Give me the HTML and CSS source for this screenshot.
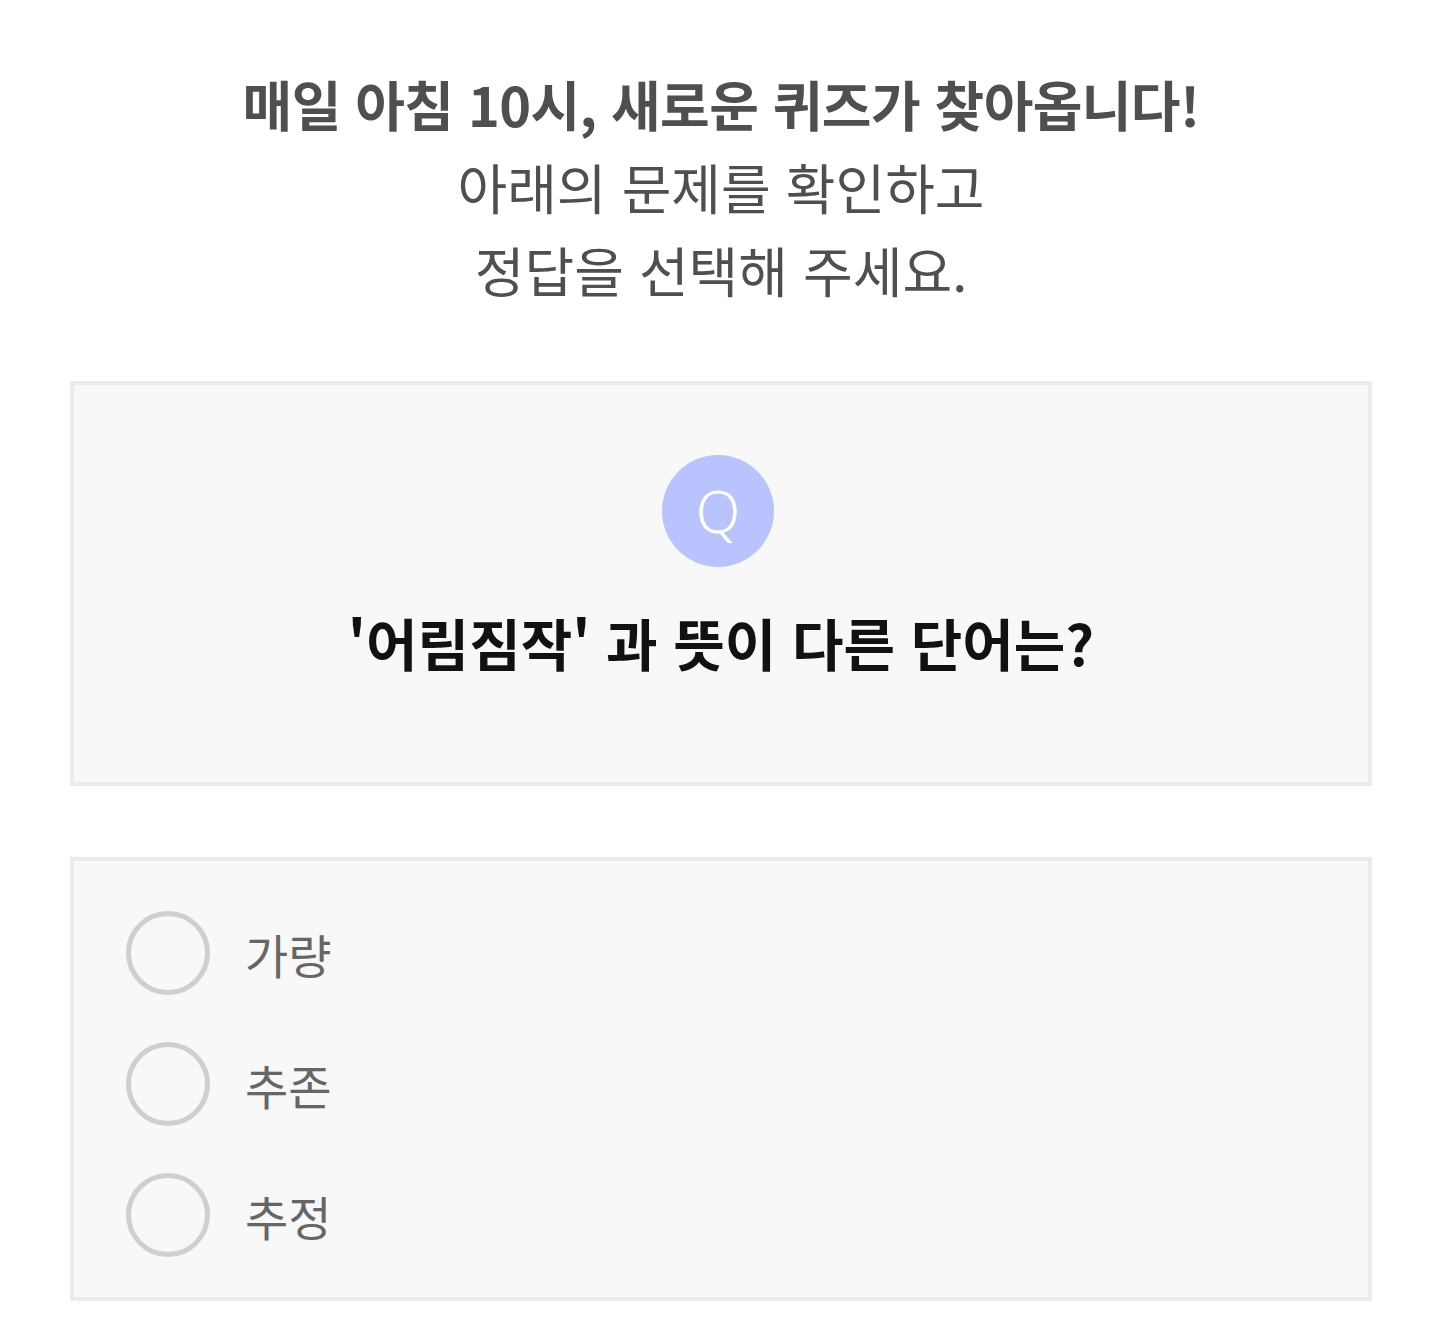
FILE: index.html
```html
<!DOCTYPE html>
<html lang="ko">
<head>
<meta charset="utf-8">
<title>오늘의 퀴즈</title>
<link rel="stylesheet" href="styles.css">
</head>
<body>
<main class="page">
  <header class="intro">
    <p class="intro-title">매일 아침 10시, 새로운 퀴즈가 찾아옵니다!</p>
    <p class="intro-line">아래의 문제를 확인하고</p>
    <p class="intro-line">정답을 선택해 주세요.</p>
  </header>

  <section class="question-card">
    <div class="q-badge">Q</div>
    <h1 class="question">'어림짐작' 과 뜻이 다른 단어는?</h1>
  </section>

  <section class="options-card">
    <label class="option"><span class="radio"></span><span class="option-text">가량</span></label>
    <label class="option"><span class="radio"></span><span class="option-text">추존</span></label>
    <label class="option"><span class="radio"></span><span class="option-text">추정</span></label>
  </section>
</main>
</body>
</html>
```

FILE: styles.css
```css
* { box-sizing: border-box; }
html, body { margin: 0; padding: 0; background: #fff; }
body {
  font-family: "Noto Sans CJK KR", "Noto Sans", sans-serif;
  color: #333;
}
.page {
  width: 1440px;
  padding: 62px 68px 36px 70px;
}
.intro {
  text-align: center;
  color: #4f4f4f;
}
.intro p { margin: 0; line-height: 83px; }
.intro-title {
  font-size: 54px;
  font-weight: 700;
  letter-spacing: -0.6px;
}
.intro-line {
  font-size: 54px;
  font-weight: 400;
}
.question-card {
  margin-top: 70px;
  height: 405px;
  background: #f8f8f8;
  border: 4px solid #ebebeb;
  display: flex;
  flex-direction: column;
  align-items: center;
  padding-top: 70px;
}
.q-badge {
  width: 112px;
  height: 112px;
  border-radius: 50%;
  background: #b9c3fd;
  color: #fff;
  font-family: "Noto Sans", sans-serif;
  font-weight: 300;
  font-size: 58px;
  line-height: 1;
  display: flex;
  align-items: center;
  justify-content: center;
  margin-right: 6px;
}
.question {
  margin: 34px 0 0;
  font-size: 56px;
  font-weight: 700;
  line-height: 81px;
  color: #111;
  letter-spacing: 0;
}
.options-card {
  margin-top: 71px;
  height: 444px;
  background: #f8f8f8;
  border: 4px solid #ebebeb;
  padding: 50px 52px 0;
  display: flex;
  flex-direction: column;
  gap: 47px;
}
.option {
  display: flex;
  align-items: center;
  gap: 35px;
}
.radio {
  width: 84px;
  height: 84px;
  border-radius: 50%;
  border: 5px solid #cfcfcf;
  flex: none;
}
.option-text {
  font-size: 47px;
  color: #666;
}
```
